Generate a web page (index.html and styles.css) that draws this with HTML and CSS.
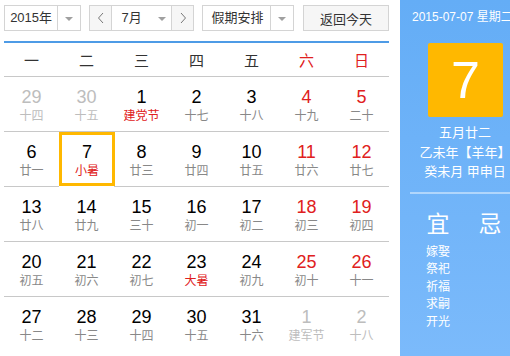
FILE: index.html
```html
<!DOCTYPE html>
<html lang="zh-CN">
<head>
  <meta charset="UTF-8">
  <title>万年历</title>
  <link rel="stylesheet" href="styles.css">
</head>
<body>
  <div class="wrap">
    <div class="calendar">
      <div class="toolbar">
        <div class="select year-select">
          <span class="select-text">2015年</span>
          <span class="select-arrow"></span>
        </div>
        <div class="month-group">
          <span class="nav-btn">
            <svg width="8" height="12" viewBox="0 0 8 12"><polyline points="6,1 1.5,6 6,11" fill="none" stroke="#777" stroke-width="1"/></svg>
          </span>
          <div class="select month-select">
            <span class="select-text">7月</span>
            <span class="select-arrow"></span>
          </div>
          <span class="nav-btn">
            <svg width="8" height="12" viewBox="0 0 8 12"><polyline points="2,1 6.5,6 2,11" fill="none" stroke="#777" stroke-width="1"/></svg>
          </span>
        </div>
        <div class="select holiday-select">
          <span class="select-text">假期安排</span>
          <span class="select-arrow"></span>
        </div>
        <button class="today-btn">返回今天</button>
      </div>

      <div class="grid">
        <div class="week">一</div>
        <div class="week">二</div>
        <div class="week">三</div>
        <div class="week">四</div>
        <div class="week">五</div>
        <div class="week weekend">六</div>
        <div class="week weekend">日</div>

        <div class="day other"><span class="num">29</span><span class="lunar">十四</span></div>
        <div class="day other"><span class="num">30</span><span class="lunar">十五</span></div>
        <div class="day"><span class="num">1</span><span class="lunar festival">建党节</span></div>
        <div class="day"><span class="num">2</span><span class="lunar">十七</span></div>
        <div class="day"><span class="num">3</span><span class="lunar">十八</span></div>
        <div class="day weekend"><span class="num">4</span><span class="lunar">十九</span></div>
        <div class="day weekend"><span class="num">5</span><span class="lunar">二十</span></div>

        <div class="day"><span class="num">6</span><span class="lunar">廿一</span></div>
        <div class="day today"><span class="num">7</span><span class="lunar festival">小暑</span></div>
        <div class="day"><span class="num">8</span><span class="lunar">廿三</span></div>
        <div class="day"><span class="num">9</span><span class="lunar">廿四</span></div>
        <div class="day"><span class="num">10</span><span class="lunar">廿五</span></div>
        <div class="day weekend"><span class="num">11</span><span class="lunar">廿六</span></div>
        <div class="day weekend"><span class="num">12</span><span class="lunar">廿七</span></div>

        <div class="day"><span class="num">13</span><span class="lunar">廿八</span></div>
        <div class="day"><span class="num">14</span><span class="lunar">廿九</span></div>
        <div class="day"><span class="num">15</span><span class="lunar">三十</span></div>
        <div class="day"><span class="num">16</span><span class="lunar">初一</span></div>
        <div class="day"><span class="num">17</span><span class="lunar">初二</span></div>
        <div class="day weekend"><span class="num">18</span><span class="lunar">初三</span></div>
        <div class="day weekend"><span class="num">19</span><span class="lunar">初四</span></div>

        <div class="day"><span class="num">20</span><span class="lunar">初五</span></div>
        <div class="day"><span class="num">21</span><span class="lunar">初六</span></div>
        <div class="day"><span class="num">22</span><span class="lunar">初七</span></div>
        <div class="day"><span class="num">23</span><span class="lunar festival">大暑</span></div>
        <div class="day"><span class="num">24</span><span class="lunar">初九</span></div>
        <div class="day weekend"><span class="num">25</span><span class="lunar">初十</span></div>
        <div class="day weekend"><span class="num">26</span><span class="lunar">十一</span></div>

        <div class="day last"><span class="num">27</span><span class="lunar">十二</span></div>
        <div class="day last"><span class="num">28</span><span class="lunar">十三</span></div>
        <div class="day last"><span class="num">29</span><span class="lunar">十四</span></div>
        <div class="day last"><span class="num">30</span><span class="lunar">十五</span></div>
        <div class="day last"><span class="num">31</span><span class="lunar">十六</span></div>
        <div class="day last other"><span class="num">1</span><span class="lunar">建军节</span></div>
        <div class="day last other"><span class="num">2</span><span class="lunar">十八</span></div>
      </div>
    </div>

    <div class="side">
      <div class="side-date">2015-07-07 星期二</div>
      <div class="side-day">7</div>
      <div class="side-lunar">
        <p>五月廿二</p>
        <p>乙未年【羊年】</p>
        <p>癸未月 甲申日</p>
      </div>
      <div class="side-divider"></div>
      <div class="yiji">
        <div class="yiji-col">
          <div class="yiji-title">宜</div>
          <ul class="yiji-list">
            <li>嫁娶</li>
            <li>祭祀</li>
            <li>祈福</li>
            <li>求嗣</li>
            <li>开光</li>
          </ul>
        </div>
        <div class="yiji-col">
          <div class="yiji-title">忌</div>
          <ul class="yiji-list"></ul>
        </div>
      </div>
    </div>
  </div>
</body>
</html>
```

FILE: styles.css
```css
body, html {
  margin: 0;
  padding: 0;
  height: 100%;
  overflow: hidden;
  background-color: #fff;
  font-family: "Liberation Sans", Arial, "Noto Sans CJK SC", sans-serif;
  color: #000;
}

.wrap {
  display: flex;
  width: 530px;
  height: 356px;
  overflow: hidden;
}

.calendar {
  width: 385px;
  padding: 5px 11px 0 4px;
  flex-shrink: 0;
}

/* top bar with selects */
.toolbar {
  display: flex;
  height: 26px;
  margin-bottom: 10px;
}

.select {
  display: flex;
  box-sizing: border-box;
  height: 26px;
  border: 1px solid #d4d4d4;
  background-color: #fff;
  font-size: 13px;
  color: #333;
}

.select-text {
  flex: 1;
  line-height: 24px;
  text-align: center;
}

.select-arrow {
  position: relative;
  width: 22px;
  border-left: 1px solid #d4d4d4;
}

.select-arrow::after {
  content: "";
  position: absolute;
  left: 7px;
  top: 11px;
  border-left: 4px solid transparent;
  border-right: 4px solid transparent;
  border-top: 4px solid #a0a0a0;
}

.year-select {
  width: 79px;
}

.month-group {
  display: flex;
  box-sizing: border-box;
  width: 105px;
  height: 26px;
  margin-left: 8px;
  border: 1px solid #d4d4d4;
}

.nav-btn {
  display: flex;
  align-items: center;
  justify-content: center;
  width: 21px;
  background-color: #f6f6f6;
}

.month-select {
  width: 61px;
  height: 24px;
  border-top: 0;
  border-bottom: 0;
}

.month-select .select-arrow {
  border-left: 0;
  width: 20px;
}

.holiday-select {
  width: 94px;
  margin-left: 8px;
}

.holiday-select .select-text {
  padding-left: 2px;
}

.today-btn {
  box-sizing: border-box;
  width: 88px;
  height: 26px;
  margin-left: 9px;
  padding: 0;
  border: 1px solid #d4d4d4;
  background-color: #f6f6f6;
  font-family: inherit;
  font-size: 13px;
  color: #333;
}

/* date grid */
.grid {
  display: grid;
  grid-template-columns: repeat(7, 55px);
  grid-template-rows: 34px repeat(5, 55px);
  border-top: 2px solid #4e9be6;
}

.week {
  display: flex;
  align-items: center;
  justify-content: center;
  border-bottom: 1px solid #c8c8c8;
  font-size: 15px;
  color: #333;
}

.week.weekend {
  color: #e02020;
}

.day {
  display: flex;
  flex-direction: column;
  align-items: center;
  box-sizing: border-box;
  padding-top: 10px;
  border-bottom: 1px solid #c8c8c8;
}

.day.last {
  border-bottom: 0;
}

.num {
  font-size: 18px;
  line-height: 20px;
}

.lunar {
  font-size: 12px;
  line-height: 18px;
  color: #888;
}

.lunar.festival {
  color: #e02020;
}

.day.weekend .num {
  color: #e02020;
}

.day.other .num,
.day.other .lunar {
  color: #bdbdbd;
}

.day.today {
  margin: 0 -1px 1px 0;
  padding-top: 7px;
  border: 3px solid #ffb800;
}

/* right info panel */
.side {
  width: 130px;
  flex-shrink: 0;
  background: linear-gradient(#64adf6, #7bbafb);
  color: #fff;
  text-align: center;
}

.side-date {
  margin-top: 9px;
  padding-left: 12px;
  text-align: left;
  font-size: 12px;
  line-height: 16px;
  white-space: nowrap;
}

.side-day {
  width: 75px;
  height: 74px;
  margin: 18px 0 0 28px;
  border-radius: 2px;
  background-color: #ffb800;
  font-size: 52px;
  line-height: 74px;
}

.side-lunar {
  margin-top: 6px;
  font-size: 13px;
}

.side-lunar p {
  margin: 0;
  line-height: 19.5px;
}

.side-divider {
  height: 2px;
  margin: 10px 0 0 10px;
  background-color: rgba(255, 255, 255, 0.45);
}

.yiji {
  display: flex;
  padding-left: 26px;
}

.yiji-col {
  width: 57px;
  text-align: left;
}

.yiji-title {
  width: 24px;
  margin-top: 18px;
  text-align: center;
  font-size: 23px;
  line-height: 24px;
}

.yiji-list {
  list-style: none;
  margin: 8px 0 0;
  padding: 0;
  font-size: 12px;
}

.yiji-list li {
  line-height: 17.5px;
}
```
